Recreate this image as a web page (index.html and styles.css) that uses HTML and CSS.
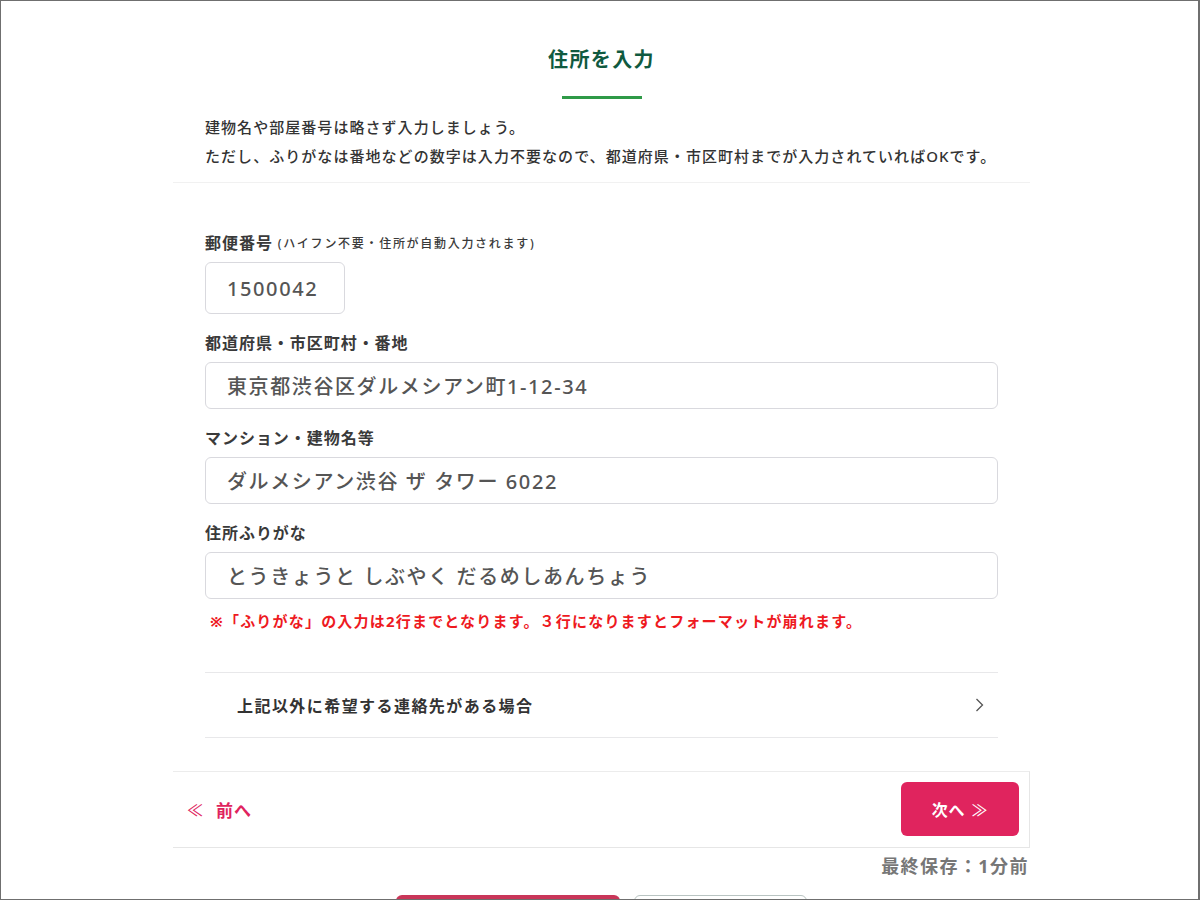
FILE: index.html
```html
<!DOCTYPE html>
<html lang="ja">
<head>
<meta charset="utf-8">
<title>住所を入力</title>
<link rel="stylesheet" href="styles.css">
</head>
<body>
<div class="frame">
  <div class="page">
    <header class="head">
      <h1 class="title">住所を入力</h1>
      <div class="title-bar"></div>
      <div class="desc">
        <p>建物名や部屋番号は略さず入力しましょう。</p>
        <p>ただし、ふりがなは番地などの数字は入力不要なので、都道府県・市区町村までが入力されていればOKです。</p>
      </div>
    </header>

    <form class="form">
      <div class="field">
        <label class="label">郵便番号<small class="hint">(ハイフン不要・住所が自動入力されます)</small></label>
        <div class="input input-zip">1500042</div>
      </div>
      <div class="field">
        <label class="label">都道府県・市区町村・番地</label>
        <div class="input">東京都渋谷区ダルメシアン町1-12-34</div>
      </div>
      <div class="field">
        <label class="label">マンション・建物名等</label>
        <div class="input">ダルメシアン渋谷 ザ タワー 6022</div>
      </div>
      <div class="field field-last">
        <label class="label">住所ふりがな</label>
        <div class="input">とうきょうと しぶやく だるめしあんちょう</div>
      </div>
      <p class="note">※「ふりがな」の入力は2行までとなります。３行になりますとフォーマットが崩れます。</p>

      <div class="link-row">
        <span>上記以外に希望する連絡先がある場合</span>
        <svg class="chev" width="9" height="14" viewBox="0 0 9 14"><path d="M1.5 1 L7.5 7 L1.5 13" fill="none" stroke="#555" stroke-width="1.3"/></svg>
      </div>
    </form>

    <nav class="footer">
      <a class="prev"><span class="dbl">≪</span>前へ</a>
      <a class="next">次へ<span class="dbl">≫</span></a>
    </nav>
    <div class="saved">最終保存：1分前</div>
    <div class="bottom-btns">
      <div class="bb bb-pink"></div>
      <div class="bb bb-gray"></div>
    </div>
  </div>
</div>
</body>
</html>
```

FILE: styles.css
```css
html, body {
  margin: 0;
  padding: 0;
  background: #fff;
}
body {
  font-family: "Noto Sans", "Noto Sans CJK JP", sans-serif;
  color: #333;
}
.frame {
  width: 1200px;
  height: 900px;
  box-sizing: border-box;
  border: 1px solid #6f6f6f;
  border-right-width: 2px;
  overflow: hidden;
}
.page {
  width: 857px;
  margin-left: 172px;
}
.head {
  border-bottom: 1px solid #f1f1f1;
  padding-top: 44px;
  padding-bottom: 11px;
}
.title {
  margin: 0;
  height: 30px;
  text-align: center;
  font-size: 20px;
  line-height: 30px;
  font-weight: 700;
  letter-spacing: 0.07em;
  color: #105a40;
}
.title-bar {
  width: 80px;
  height: 3px;
  margin: 21px auto 0;
  background: #2f9a47;
}
.desc {
  margin-top: 14px;
  padding-left: 32px;
}
.desc p {
  margin: 0;
  height: 29px;
  font-size: 15px;
  line-height: 29px;
  font-weight: 500;
  letter-spacing: 0.07em;
  color: #333;
}
.form {
  padding: 47px 32px 0;
}
.field {
  margin-bottom: 16px;
}
.field-last {
  margin-bottom: 0;
}
.label {
  display: flex;
  align-items: center;
  height: 24px;
  font-size: 16px;
  font-weight: 700;
  letter-spacing: 0.06em;
  color: #3a3a3a;
  margin-bottom: 8px;
}
.hint {
  font-size: 12px;
  font-weight: 500;
  letter-spacing: 1.7px;
  margin-left: 5px;
  padding-top: 1px;
}
.input {
  box-sizing: border-box;
  height: 47px;
  border: 1px solid #d9d9de;
  border-radius: 6px;
  padding: 0 21px;
  display: flex;
  align-items: center;
  font-size: 20px;
  font-weight: 500;
  letter-spacing: 0.08em;
  color: #555;
}
.input-zip {
  width: 140px;
  height: 52px;
}
.note {
  margin: 10px 0 0 5px;
  height: 24px;
  font-size: 15px;
  line-height: 24px;
  font-weight: 700;
  letter-spacing: 1.2px;
  color: #ee1a1f;
}
.link-row {
  margin-top: 39px;
  height: 64px;
  border-top: 1px solid #e8e8ea;
  border-bottom: 1px solid #e8e8ea;
  display: flex;
  align-items: center;
  justify-content: space-between;
  padding: 0 14px 0 32px;
  font-size: 16px;
  font-weight: 700;
  letter-spacing: 0.09em;
  color: #333;
}
.chev {
  display: block;
}
.footer {
  margin-top: 33px;
  height: 54px;
  border-top: 1px solid #ececec;
  border-right: 1px solid #e6e6e6;
  border-bottom: 1px solid #e6e6e6;
  padding: 10px 10px 11px 14px;
  display: flex;
  align-items: center;
  justify-content: space-between;
}
.prev {
  display: flex;
  align-items: center;
  font-size: 17px;
  font-weight: 700;
  color: #e0245e;
  letter-spacing: 0.06em;
}
.prev .dbl {
  font-weight: 400;
  margin-right: 12px;
  font-size: 16px;
}
.next {
  width: 118px;
  height: 54px;
  box-sizing: border-box;
  border-radius: 6px;
  background: #e0245e;
  color: #fff;
  display: flex;
  align-items: center;
  justify-content: center;
  font-size: 16px;
  font-weight: 700;
  letter-spacing: 0.05em;
}
.next .dbl {
  font-weight: 400;
  margin-left: 6px;
}
.saved {
  margin-top: 6px;
  height: 24px;
  text-align: right;
  padding-right: 1px;
  font-size: 18px;
  line-height: 24px;
  font-weight: 700;
  letter-spacing: 0.08em;
  color: #777;
}
.bottom-btns {
  display: flex;
  gap: 14px;
  margin-top: 17px;
  padding-left: 223px;
}
.bb {
  height: 40px;
  border-radius: 6px;
  box-sizing: border-box;
}
.bb-pink {
  width: 224px;
  background: #c93659;
}
.bb-gray {
  width: 173px;
  border: 1px solid #b9c4c2;
  background: #fff;
}
```
